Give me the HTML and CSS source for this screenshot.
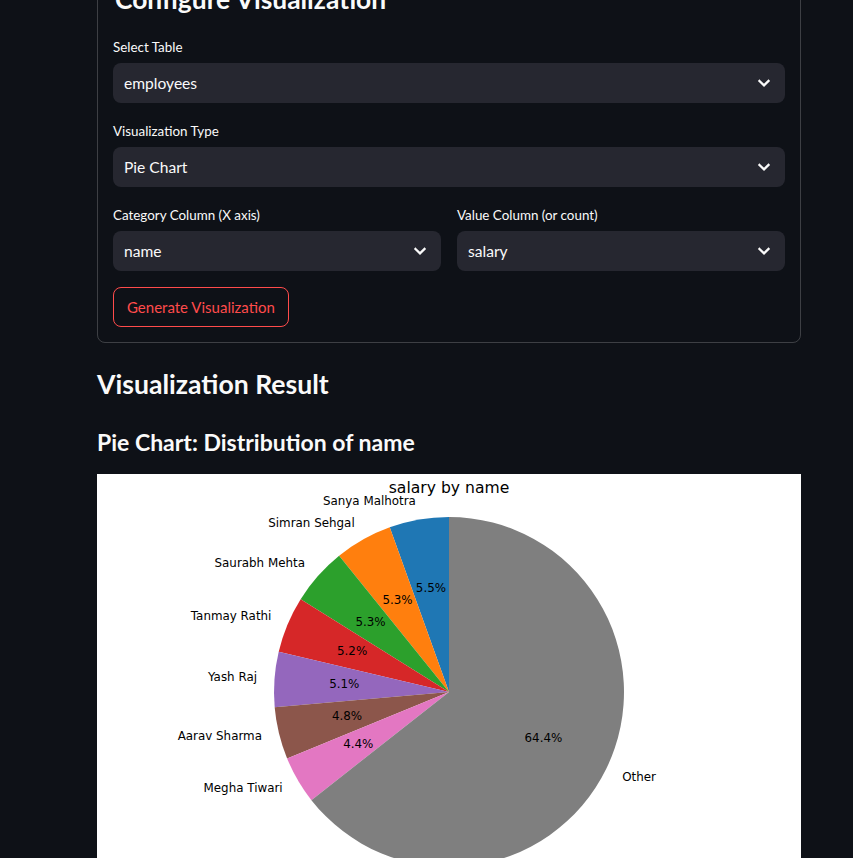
FILE: index.html
```html
<!DOCTYPE html>
<html lang="en">
<head>
<meta charset="utf-8">
<title>Configure Visualization</title>
<link rel="stylesheet" href="styles.css">
</head>
<body>
<main class="main">
  <form class="form">
    <h3 class="form-title">Configure Visualization</h3>
    <div class="field">
      <label class="label">Select Table</label>
      <div class="select"><span>employees</span><svg class="chev" viewBox="0 0 16 16"><polyline points="3.5,6 8,10.3 12.5,6"/></svg></div>
    </div>
    <div class="field">
      <label class="label">Visualization Type</label>
      <div class="select"><span>Pie Chart</span><svg class="chev" viewBox="0 0 16 16"><polyline points="3.5,6 8,10.3 12.5,6"/></svg></div>
    </div>
    <div class="row">
      <div class="field">
        <label class="label">Category Column (X axis)</label>
        <div class="select"><span>name</span><svg class="chev" viewBox="0 0 16 16"><polyline points="3.5,6 8,10.3 12.5,6"/></svg></div>
      </div>
      <div class="field">
        <label class="label">Value Column (or count)</label>
        <div class="select"><span>salary</span><svg class="chev" viewBox="0 0 16 16"><polyline points="3.5,6 8,10.3 12.5,6"/></svg></div>
      </div>
    </div>
    <div><button type="button" class="btn">Generate Visualization</button></div>
  </form>

  <h3 class="h3">Visualization Result</h3>
  <h4 class="h4">Pie Chart: Distribution of name</h4>

  <div class="chart">
    <svg class="chart-svg" viewBox="0 0 704 560" width="704" height="560">
      <rect x="0" y="0" width="704" height="560" fill="#ffffff"/>
      <text class="title" x="352" y="19" text-anchor="middle">salary by name</text>
      <g>
        <path fill="#1f77b4" d="M352 218 L352 43 A175 175 0 0 0 292.73 53.34 Z"/>
        <path fill="#ff7f0e" d="M352 218 L292.73 53.34 A175 175 0 0 0 242.13 81.78 Z"/>
        <path fill="#2ca02c" d="M352 218 L242.13 81.78 A175 175 0 0 0 203.65 125.16 Z"/>
        <path fill="#d62728" d="M352 218 L203.65 125.16 A175 175 0 0 0 181.71 177.68 Z"/>
        <path fill="#9467bd" d="M352 218 L181.71 177.68 A175 175 0 0 0 177.68 233.37 Z"/>
        <path fill="#8c564b" d="M352 218 L177.68 233.37 A175 175 0 0 0 190.11 284.47 Z"/>
        <path fill="#e377c2" d="M352 218 L190.11 284.47 A175 175 0 0 0 214.40 326.13 Z"/>
        <path fill="#7f7f7f" d="M352 218 L214.40 326.13 A175 175 0 1 0 352 43 Z"/>
      </g>
      <g class="lbl" text-anchor="end">
        <text x="318.9" y="26.6">Sanya Malhotra</text>
        <text x="257.7" y="48.6">Simran Sehgal</text>
        <text x="208.0" y="88.6">Saurabh Mehta</text>
        <text x="174.4" y="142.2">Tanmay Rathi</text>
        <text x="160.0" y="202.6">Yash Raj</text>
        <text x="165.0" y="262.2">Aarav Sharma</text>
        <text x="185.7" y="313.6">Megha Tiwari</text>
      </g>
      <g class="lbl" text-anchor="start">
        <text x="525.2" y="302.6">Other</text>
      </g>
      <g class="lbl" text-anchor="middle">
        <text x="333.95" y="114.1">5.5%</text>
        <text x="300.55" y="126.0">5.3%</text>
        <text x="273.5" y="147.8">5.3%</text>
        <text x="255.1" y="177.0">5.2%</text>
        <text x="247.3" y="209.9">5.1%</text>
        <text x="250.0" y="242.3">4.8%</text>
        <text x="261.3" y="270.4">4.4%</text>
        <text x="446.4" y="263.9">64.4%</text>
      </g>
    </svg>
  </div>
</main>
</body>
</html>
```
FILE: styles.css
```css
* { box-sizing: border-box; }
html, body {
  margin: 0;
  padding: 0;
  background: #0e1117;
  overflow: hidden;
}
body {
  font-family: "Lato", "Noto Sans", sans-serif;
  color: #fafafa;
}
.main {
  width: 704px;
  margin-left: 97px;
  display: flex;
  flex-direction: column;
}
.form {
  margin: -34px 0 0 0;
  border: 1px solid rgba(250, 250, 250, 0.2);
  border-radius: 8px;
  padding: 15px;
  display: flex;
  flex-direction: column;
  gap: 16px;
}
.form-title {
  margin: 0;
  padding-left: 2px;
  font-size: 26.4px;
  font-weight: 700;
  line-height: 34px;
  padding-bottom: 3px;
}
.field {
  display: flex;
  flex-direction: column;
  min-width: 0;
}
.label {
  font-size: 13.4px;
  line-height: 24px;
  height: 24px;
  margin-bottom: 4px;
  color: #fafafa;
}
.select {
  height: 40px;
  background: #262730;
  border-radius: 8px;
  display: flex;
  align-items: center;
  justify-content: space-between;
  padding: 0 13px 0 11px;
  font-size: 15.6px;
}
.chev {
  width: 16px;
  height: 16px;
  fill: none;
  stroke: #fafafa;
  stroke-width: 2.3;
  stroke-linecap: square;
}
.row {
  display: grid;
  grid-template-columns: 1fr 1fr;
  gap: 16px;
}
.btn {
  height: 40px;
  padding: 0 13px;
  background: transparent;
  border: 1px solid #ff4b4b;
  border-radius: 8px;
  color: #ff4b4b;
  font-family: inherit;
  font-size: 15px;
}
.h3 {
  margin: 24px 0 0 0;
  font-size: 26.6px;
  font-weight: 700;
  line-height: 34px;
}
.h4 {
  margin: 27px 0 0 0;
  font-size: 23px;
  font-weight: 700;
  line-height: 29px;
}
.chart {
  margin-top: 17px;
  width: 704px;
}
.chart-svg {
  display: block;
}
.title {
  font-family: "DejaVu Sans", sans-serif;
  font-size: 15.6px;
  fill: #000;
}
.lbl text {
  font-family: "DejaVu Sans", sans-serif;
  font-size: 11.9px;
  fill: #000;
  dominant-baseline: central;
}
```
